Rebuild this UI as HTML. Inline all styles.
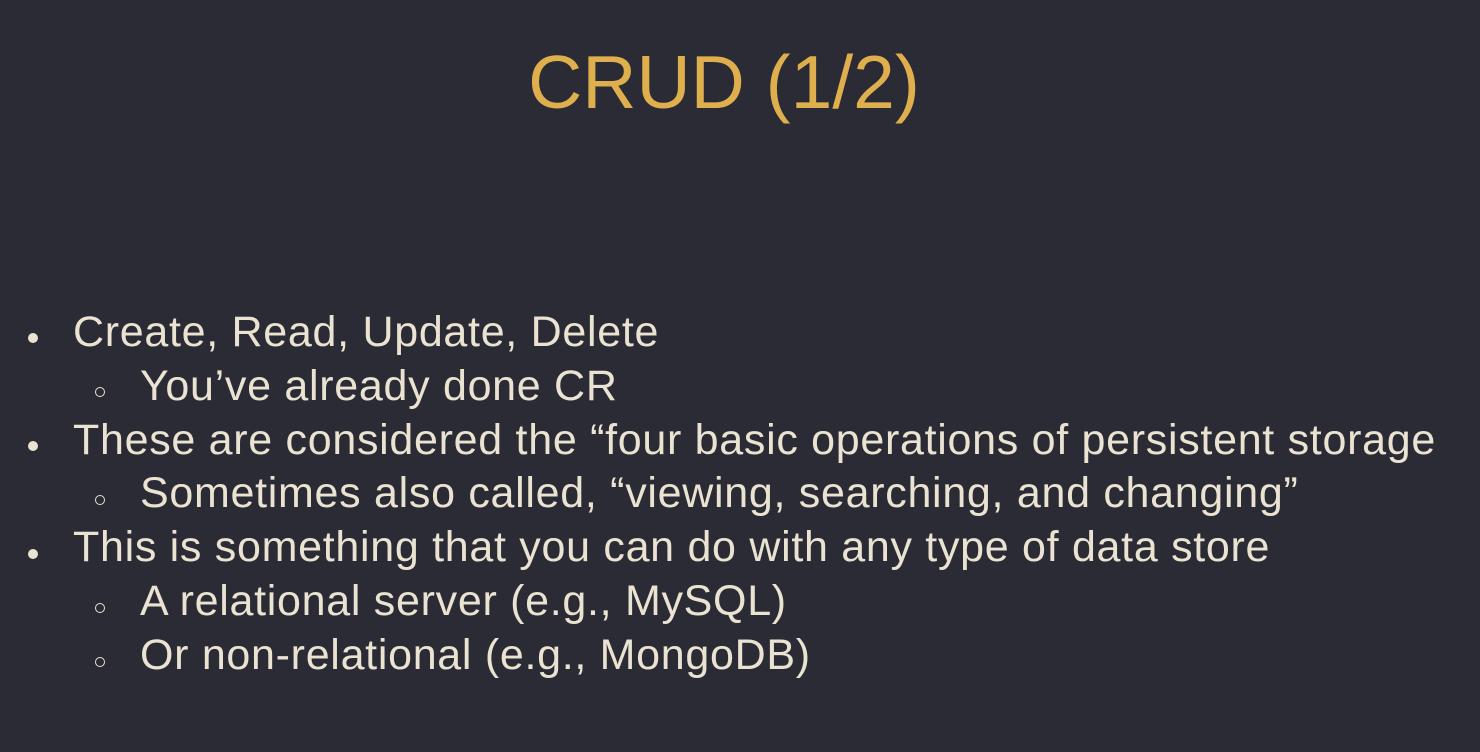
<!DOCTYPE html>
<html><head><meta charset="utf-8"><style>
html,body{margin:0;padding:0;}
body{width:1480px;height:752px;background:#2a2b35;position:relative;overflow:hidden;font-family:"Liberation Sans",Arial,sans-serif;}
.t{position:absolute;left:0;top:44px;width:1448px;text-align:center;font-size:75px;line-height:76px;color:#dfae4d;}
.l{position:absolute;font-size:43px;letter-spacing:0.7px;line-height:54px;color:#ebe3d1;white-space:nowrap;}
.d{position:absolute;width:10px;height:10px;border-radius:50%;background:#ebe3d1;}
.c{position:absolute;width:8px;height:8px;border-radius:50%;border:1.4px solid #ebe3d1;}
</style></head><body>
<div class="t">CRUD (1/2)</div>
<div class="d" style="left:28px;top:333px"></div>
<div class="l" style="left:73px;top:305px">Create, Read, Update, Delete</div>
<div class="c" style="left:95px;top:387px"></div>
<div class="l" style="left:140px;top:359px">You’ve already done CR</div>
<div class="d" style="left:28px;top:441px"></div>
<div class="l" style="left:73px;top:413px">These are considered the “four basic operations of persistent storage</div>
<div class="c" style="left:95px;top:495px"></div>
<div class="l" style="left:140px;top:466px">Sometimes also called, “viewing, searching, and changing”</div>
<div class="d" style="left:28px;top:549px"></div>
<div class="l" style="left:73px;top:520px">This is something that you can do with any type of data store</div>
<div class="c" style="left:95px;top:603px"></div>
<div class="l" style="left:140px;top:574px">A relational server (e.g., MySQL)</div>
<div class="c" style="left:95px;top:657px"></div>
<div class="l" style="left:140px;top:628px">Or non-relational (e.g., MongoDB)</div>
</body></html>
